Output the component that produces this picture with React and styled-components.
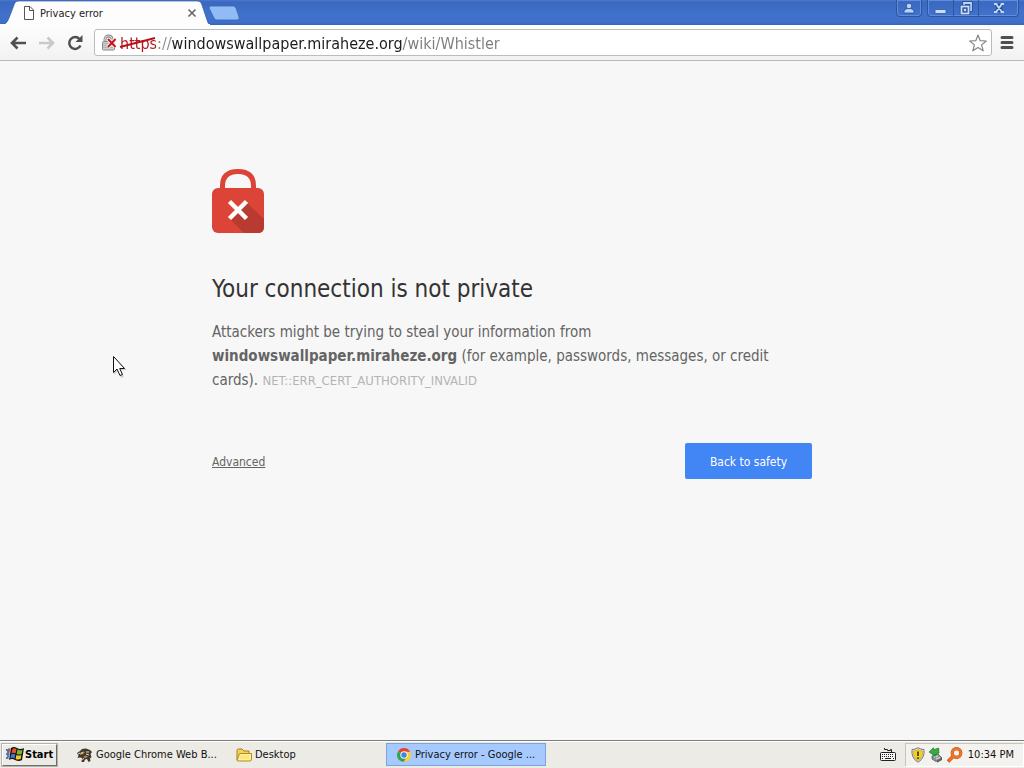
import React from "react";
import styled, { createGlobalStyle } from "styled-components";

const Global = createGlobalStyle`
  * { box-sizing: border-box; }
  body { margin: 0; font-family: Tahoma, "DejaVu Sans Condensed", "Noto Sans", sans-serif; background: #f7f7f7; }
  button, input { font-family: inherit; }
`;

const Desktop = styled.div`
  display: flex;
  flex-direction: column;
  min-height: 100vh;
`;

const TitleBar = styled.header`
  display: flex;
  align-items: flex-start;
  height: 25px;
  background: linear-gradient(#4a78cd 0, #3a68c0 2px, #4172cb 60%, #3d6fc9 90%, #3563b8);
`;

const Tab = styled.div`
  position: relative;
  display: flex;
  align-items: center;
  width: 210px;
  height: 25px;
  padding: 1px 12px 0 23px;
  font-size: 11px;
  color: #222;
`;

const TabShape = styled.svg`
  position: absolute;
  inset: 0;
`;

const TabTitle = styled.span`
  position: relative;
  flex: 1;
  padding-left: 5px;
  white-space: nowrap;
`;

const PlainButton = styled.button`
  position: relative;
  display: flex;
  align-items: center;
  justify-content: center;
  flex: none;
  width: ${(p) => p.$w}px;
  height: ${(p) => p.$h}px;
  padding: 0;
  border: 0;
  background: none;
`;

const Glyph = styled.svg`
  position: relative;
  display: block;
  flex: none;
`;

const WindowButtons = styled.div`
  display: flex;
  margin-left: auto;
  padding-right: 5px;
`;

const ButtonGroup = styled.div`
  display: flex;
  height: 17px;
  margin-left: 5px;
  border: 1px solid #2f559f;
  border-top: 0;
  border-radius: 0 0 4px 4px;
  box-shadow: inset 0 0 0 1px #5f8ddc;
  overflow: hidden;
`;

const WindowButton = styled(PlainButton)`
  & + & { border-left: 1px solid #2f559f; }
`;

const Toolbar = styled.div`
  display: flex;
  align-items: center;
  height: 36px;
  padding: 0 8px 0 3px;
  background: linear-gradient(#fdfdfd, #f2f2f2);
  border-bottom: 1px solid #b9b9b9;
`;

const AddressBar = styled.label`
  display: flex;
  align-items: center;
  flex: 1;
  height: 27px;
  margin: 0 6px 0 5px;
  padding: 0 4px 0 6px;
  background: #fff;
  border: 1px solid #bcbcbc;
  border-radius: 3px;
`;

const UrlField = styled.div`
  position: relative;
  flex: 1;
  display: flex;
  padding-left: 1px;
`;

const UrlInput = styled.input`
  flex: 1;
  width: 100%;
  height: 25px;
  padding: 2px 0 0;
  border: 0;
  outline: 0;
  font-size: 16px;
  color: transparent;
  background: linear-gradient(90deg, #b3141c 36px, #8a8a8a 36px 51px, #1c1c1c 51px 282px, #7c7c7c 282px);
  background-clip: text;
  -webkit-background-clip: text;
`;

const Strike = styled.svg`
  position: absolute;
  left: 0;
  top: 5px;
`;

const Page = styled.main`
  flex: 1;
  padding: 108px 24px 24px;
  background: #f7f7f7;
`;

const Notice = styled.section`
  max-width: 600px;
  margin: 0 auto;
  color: #646464;
`;

const Heading = styled.h1`
  margin: 41px 0 16px;
  font-size: 24px;
  line-height: 30px;
  font-weight: 400;
  color: #333;
`;

const Message = styled.p`
  max-width: 570px;
  margin: 0;
  font-size: 15px;
  line-height: 24px;
`;

const ErrorCode = styled.span`
  font-size: 13px;
  color: #b4b4b4;
`;

const Actions = styled.div`
  display: flex;
  align-items: center;
  justify-content: space-between;
  margin-top: 50px;
`;

const DetailsLink = styled.a`
  padding-top: 2px;
  font-size: 12px;
  color: #646464;
  text-decoration: underline;
`;

const PrimaryButton = styled.button`
  height: 36px;
  min-width: 127px;
  padding: 2px 24px 0;
  border: 0;
  border-radius: 2px;
  font-size: 12px;
  color: #fff;
  background: #4285f4;
  white-space: nowrap;
`;

const Taskbar = styled.footer`
  display: flex;
  align-items: center;
  height: 28px;
  padding: 0 0 0 2px;
  background: #ecebe5;
  border-top: 1px solid #7d7d78;
  box-shadow: inset 0 1px #fff;
`;

const StartButton = styled.button`
  display: flex;
  align-items: center;
  gap: 1px;
  width: 55px;
  height: 22px;
  padding: 0 2px 0 3px;
  margin-right: 9px;
  border: 1px solid;
  border-color: #fff #6d6d69 #6d6d69 #fff;
  box-shadow: 0 0 0 1px #b5b4ac;
  font-size: 11px;
  font-weight: 700;
  color: #000;
  background: #ecebe5;
`;

const TaskButton = styled.button`
  display: flex;
  align-items: center;
  gap: 3px;
  width: 160px;
  height: 23px;
  padding: 0 2px 0 9px;
  border: 1px solid ${(p) => (p.$active ? "#7ba3dc" : "transparent")};
  font-size: 11px;
  color: #111;
  background: ${(p) => (p.$active ? "#a6caff" : "none")};
  white-space: nowrap;
`;

const Tray = styled.div`
  display: flex;
  align-items: center;
  gap: 2px;
  height: 24px;
  margin-left: 9px;
  padding: 0 9px 0 4px;
  border: 1px solid;
  border-color: #c6c5bd #fff #fff #c6c5bd;
  background: #f3f2ee;
  font-size: 11px;
  color: #111;
`;

const KeyboardSlot = styled.div`
  margin-left: auto;
`;

const Clock = styled.time`
  margin-left: 3px;
  white-space: nowrap;
`;

const Pointer = styled.svg`
  position: absolute;
  left: 112px;
  top: 355px;
  pointer-events: none;
`;

const BrowserTab = () => (
  <Tab>
    <TabShape width="210" height="25" viewBox="0 0 210 25" aria-hidden="true">
      <path d="M0 25C5 25 7 23 9 18L14 5C15 2 16 1 19 1H197C200 1 201 2 202 5L207 20C208 23 209 25 210 25Z" fill="#fdfdfd" stroke="#3159a4" strokeWidth=".7" />
      <path d="M0 25H210" stroke="#fdfdfd" strokeWidth="2" />
    </TabShape>
    <Glyph width="12" height="14" viewBox="0 0 12 14" fill="#fff" stroke="#555" aria-hidden="true">
      <path d="M1.5 .5H7L10.500 4V13.500H1.500ZM6.500 .5V4.500H10.500" />
    </Glyph>
    <TabTitle>Privacy error</TabTitle>
    <PlainButton $w={12} $h={14} aria-label="Close tab">
      <Glyph width="10" height="10" viewBox="0 0 10 10" stroke="#666" strokeWidth="1.600"><path d="M1.500 1.500L8.500 8.500M8.500 1.500L1.500 8.500" /></Glyph>
    </PlainButton>
  </Tab>
);

const Controls = () => (
  <WindowButtons>
    <ButtonGroup>
      <PlainButton $w={24} $h={16} aria-label="Profile">
        <Glyph width="12" height="12" viewBox="0 0 12 12" fill="#b9d4fb" stroke="#274a8c" strokeWidth=".8"><path d="M1 11V9.500Q1 7 4.500 6.500H7.500Q11 7 11 9.500V11Z" /><circle cx="6" cy="4" r="2.800" /></Glyph>
      </PlainButton>
    </ButtonGroup>
    <ButtonGroup>
      <WindowButton $w={25} $h={16} aria-label="Minimize">
        <Glyph width="13" height="14" viewBox="0 0 13 14"><rect x="1" y="8.500" width="11" height="4" rx="1" fill="#c9dcfa" stroke="#274a8c" strokeWidth=".7" /></Glyph>
      </WindowButton>
      <WindowButton $w={25} $h={16} aria-label="Restore">
        <Glyph width="14" height="14" viewBox="0 0 14 14" fill="none">
          <path d="M5 3.500V2H12V9H10" stroke="#274a8c" strokeWidth="3.400" /><path d="M5 4V2H12V9H10" stroke="#bdd5fb" strokeWidth="1.800" />
          <rect x="2.500" y="5.500" width="7" height="7" stroke="#274a8c" strokeWidth="3.400" /><rect x="2.500" y="5.500" width="7" height="7" stroke="#c9dcfa" strokeWidth="1.800" /><path d="M5 8H7V10H5Z" fill="#c9dcfa" />
        </Glyph>
      </WindowButton>
      <WindowButton $w={40} $h={16} aria-label="Close">
        <Glyph width="12" height="12" viewBox="0 0 12 12" fill="none"><path d="M3 2L9 10M9 2L3 10" stroke="#274a8c" strokeWidth="4" /><path d="M1 2H4.500M7.500 2H11M1 10H4.500M7.500 10H11M3 2L9 10M9 2L3 10" stroke="#b9daf5" strokeWidth="2" /></Glyph>
      </WindowButton>
    </ButtonGroup>
  </WindowButtons>
);

const NavArrow = ({ forward }) => (
  <PlainButton $w={29} $h={26} aria-label={forward ? "Forward" : "Back"}>
    <Glyph width="16" height="14" viewBox="0 0 16 14" fill="none" stroke={forward ? "#c9c9c9" : "#505050"} strokeWidth="2.600">
      <path d={forward ? "M0 7H14M8.500 1.500L14 7L8.500 12.500" : "M16 7H2M7.500 1.500L2 7L7.500 12.500"} />
    </Glyph>
  </PlainButton>
);

const BrokenLock = () => (
  <Glyph width="18" height="18" viewBox="0 0 18 18" aria-hidden="true">
    <path d="M4 9V5.500Q4 2 7.500 2T11 5.500V9" fill="none" stroke="#858585" strokeWidth="2.800" />
    <path d="M4 9V5.500Q4 2 7.500 2T11 5.500V9" fill="none" stroke="#d5d5d5" strokeWidth="1.200" />
    <rect x="1.500" y="7.500" width="12" height="8.500" rx="1" fill="#cfcfcf" stroke="#8b8b8b" />
    <path d="M2 9.500H13M2 11.500H13M2 13.500H13" stroke="#a5a5a5" strokeWidth=".7" />
    <path d="M7 5L14.500 13M14.500 5L7 13" stroke="#fff" strokeWidth="3.600" />
    <path d="M7 5L14.500 13M14.500 5L7 13" stroke="#c3161c" strokeWidth="2" />
  </Glyph>
);

const ErrorLock = () => (
  <Glyph width="52" height="64" viewBox="0 0 52 64" role="img" aria-label="Connection not secure">
    <path d="M10.500 22V17Q10.500 2.500 26 2.500T41.500 17V22" fill="none" stroke="#db4437" strokeWidth="5" />
    <rect y="19" width="52" height="45" rx="6" fill="#db4437" />
    <path d="M34 33L52 50V58Q52 64 46 64H32L18 50Z" fill="#b83a31" />
    <path d="M17.500 32.500L34.500 49.500M34.500 32.500L17.500 49.500" stroke="#fff" strokeWidth="4.500" />
  </Glyph>
);

const WindowsFlag = () => (
  <Glyph width="18" height="17" viewBox="0 0 18 17" aria-hidden="true">
    <path d="M5 2Q8 0 11 2Q14 4 18 2L16 14Q13 16 9 14Q6 12 3 14Z" fill="#111" />
    <path d="M6.500 3Q8.500 1.500 10.500 3L9.500 7.500Q7.500 6 5.500 7.500Z" fill="#e9532b" />
    <path d="M11.500 3.500Q14 5 16.500 3.800L15.700 8Q13 9.200 10.600 8Z" fill="#76b82f" />
    <path d="M5.200 8.600Q7.300 7 9.300 8.600L8.500 12.500Q6.500 11 4.300 12.600Z" fill="#3f78d3" />
    <path d="M10.400 9Q13 10.200 15.400 9L14.700 13Q12 14 9.600 12.900Z" fill="#f9c827" />
    <path d="M0 4H4M1 6H3.500M0 8H3.500M1 10H3M0 12H2.500" stroke="#2e4f8e" strokeWidth="1.300" />
    <path d="M2 3H5M2 5H4.500" stroke="#c44" />
  </Glyph>
);

const Footprint = () => (
  <Glyph width="17" height="16" viewBox="0 0 17 16" aria-hidden="true">
    <path d="M1 6L4 4L6 2L10 1.500L14 3L16 5L14.500 7L15.500 10L14 11.500L14.500 14L12.500 15L11 12L9 12.500L8 15H5.500L6 11L4 10.500L1.500 11L2.500 8.500Z" fill="#41382b" />
    <path d="M4 6L7 4.500L9 5L7 7L4 8M7 10L10 8.500L12 10L9 11M10 4L13 4" fill="#b58b52" />
    <path d="M10 5L13 5M5 6H7M10 7L13 8M6.500 13L7.500 11M2 7L4 6" stroke="#e6dcc4" strokeWidth="1" />
  </Glyph>
);

const Folder = () => (
  <Glyph width="16" height="16" viewBox="0 0 16 16" aria-hidden="true">
    <path d="M1 13V3.500Q1 2 2.500 2H6L8 4H13V13Z" fill="#f4d35c" stroke="#a57c1b" />
    <path d="M1 13.500L3.500 6.500H15.500V12Q15.500 14 14 14H2Z" fill="#fff0a0" stroke="#b18b22" />
    <path d="M4.500 8.500H13.500V12H4Z" fill="#ffe578" />
  </Glyph>
);

const ChromeLogo = () => (
  <Glyph width="16" height="16" viewBox="0 0 16 16" aria-hidden="true">
    <circle cx="8" cy="8" r="7" fill="#fc3" />
    <path d="M8 8L2 4.400A7 7 0 0 1 14.200 4.800H8Z" fill="#df4638" />
    <path d="M8 8L2 4.400A7 7 0 0 0 7.500 15L11 9.500Z" fill="#2ca45b" />
    <circle cx="8" cy="8" r="3.700" fill="#f4f7fb" /><circle cx="8" cy="8" r="2.700" fill="#3d82e4" />
  </Glyph>
);

const Keyboard = () => (
  <Glyph width="16" height="15" viewBox="0 0 16 15" aria-hidden="true">
    <path d="M4.500 1V2.500H7.500V3.500H10.500V2.500H11.500V5" fill="none" stroke="#222" />
    <rect x=".5" y="5.500" width="15" height="8" rx="1" fill="#f8f8f4" stroke="#222" />
    <path d="M2 7.500H14M2 9.500H14" stroke="#222" strokeDasharray="1 1" /><path d="M2 11.500H3M5 11.500H11M13 11.500H14" stroke="#222" />
  </Glyph>
);

const Shield = () => (
  <Glyph width="16" height="16" viewBox="0 0 16 16" aria-hidden="true">
    <path d="M8 .7Q11 2.700 14 2.500Q15 11 8 15.300Q1 11 2 2.500Q5 2.700 8 .7Z" fill="#e9e9e4" stroke="#777" />
    <path d="M8 2.500Q10.500 4 12.700 4Q13 10.500 8 13.700Q3 10.500 3.300 4Q5.500 4 8 2.500Z" fill="#f6d21d" stroke="#b99717" strokeWidth=".6" />
    <path d="M8 4.500V9M8 10.300V12" stroke="#222" strokeWidth="1.500" />
  </Glyph>
);

const SafeRemove = () => (
  <Glyph width="16" height="16" viewBox="0 0 16 16" aria-hidden="true">
    <path d="M4 9L10 7L14 11L8 14.500L4 12Z" fill="#8d9791" stroke="#505a55" strokeWidth=".8" />
    <path d="M6 10L10 9M8 12L12 10.500" stroke="#dfe5e0" />
    <path d="M1 5L5.500 .8L6 2.700L10.500 1L11 6L7 7.500L7.300 9.300Z" fill="#35ad42" stroke="#1c752b" strokeWidth=".7" />
    <path d="M9 14L14 10.500V13L9 15.700Z" fill="#56615b" />
  </Glyph>
);

const Magnifier = () => (
  <Glyph width="17" height="16" viewBox="0 0 17 16" fill="none" aria-hidden="true">
    <path d="M2 14.500L7 9.500" stroke="#bd4f16" strokeWidth="3.600" /><circle cx="10.500" cy="6" r="4.300" stroke="#b84d16" strokeWidth="3.200" />
    <circle cx="10.500" cy="6" r="4.300" stroke="#ee7426" strokeWidth="2.400" /><path d="M2.500 14L7 9.500" stroke="#ee7426" strokeWidth="2.400" />
  </Glyph>
);

export default function App() {
  return (
    <Desktop>
      <Global />
      <TitleBar>
        <BrowserTab />
        <PlainButton $w={30} $h={25} aria-label="New tab">
          <Glyph width="32" height="16" viewBox="0 0 32 16"><path d="M2 1H24Q26 1 27 3L30 12Q31 15 28 15H8Q6 15 5 13L0 3Q0 1 2 1Z" fill="#90bbf4" stroke="#3966b5" strokeWidth=".8" /></Glyph>
        </PlainButton>
        <Controls />
      </TitleBar>
      <Toolbar>
        <NavArrow />
        <NavArrow forward />
        <PlainButton $w={28} $h={26} aria-label="Reload">
          <Glyph width="16" height="16" viewBox="0 0 16 16" fill="none" stroke="#505050" strokeWidth="2.500"><path d="M13.500 10.500A5.900 5.900 0 1 1 12.500 4" /><path d="M15.500 0V7H8.500Z" fill="#505050" stroke="none" /></Glyph>
        </PlainButton>
        <AddressBar>
          <BrokenLock />
          <UrlField>
            <UrlInput aria-label="Address" defaultValue="https://windowswallpaper.miraheze.org/wiki/Whistler" />
            <Strike width="38" height="14" viewBox="0 0 38 14" aria-hidden="true"><path d="M1 12L36 3" stroke="#b3141c" strokeWidth="2" /></Strike>
          </UrlField>
          <PlainButton $w={18} $h={22} aria-label="Bookmark this page">
            <Glyph width="18" height="18" viewBox="0 0 18 18" fill="#fff" stroke="#858585" strokeWidth="1.200"><path d="M9 1L11.200 6.700L17.300 7L12.600 10.900L14.200 16.800L9 13.500L3.800 16.800L5.400 10.900L.7 7L6.800 6.700Z" strokeLinejoin="round" /></Glyph>
          </PlainButton>
        </AddressBar>
        <PlainButton $w={18} $h={26} aria-label="Menu">
          <Glyph width="14" height="13" viewBox="0 0 14 13" stroke="#505050" strokeWidth="3" strokeLinecap="round"><path d="M2 1.500H12M2 6.500H12M2 11.500H12" /></Glyph>
        </PlainButton>
      </Toolbar>
      <Page>
        <Notice>
          <ErrorLock />
          <Heading>Your connection is not private</Heading>
          <Message>
            Attackers might be trying to steal your information from <strong>windowswallpaper.miraheze.org</strong> (for example, passwords, messages, or credit cards). <ErrorCode>NET::ERR_CERT_AUTHORITY_INVALID</ErrorCode>
          </Message>
          <Actions>
            <DetailsLink href="#advanced">Advanced</DetailsLink>
            <PrimaryButton>Back to safety</PrimaryButton>
          </Actions>
        </Notice>
      </Page>
      <Taskbar>
        <StartButton><WindowsFlag />Start</StartButton>
        <TaskButton><Footprint />Google Chrome Web B...</TaskButton>
        <TaskButton><Folder />Desktop</TaskButton>
        <TaskButton $active><ChromeLogo />Privacy error - Google ...</TaskButton>
        <KeyboardSlot><Keyboard /></KeyboardSlot>
        <Tray>
          <Shield /><SafeRemove /><Magnifier />
          <Clock>10:34 PM</Clock>
        </Tray>
      </Taskbar>
      <Pointer width="16" height="24" viewBox="0 0 16 24" aria-hidden="true">
        <path d="M2 2V20L6 16L9 23L12 22L9 15H15Z" fill="#999" opacity=".4" />
        <path d="M1.500 1.500V17.500L5 14L8 20.500L10.500 19.500L7.700 13.500H12.500Z" fill="#fff" stroke="#111" />
      </Pointer>
    </Desktop>
  );
}
